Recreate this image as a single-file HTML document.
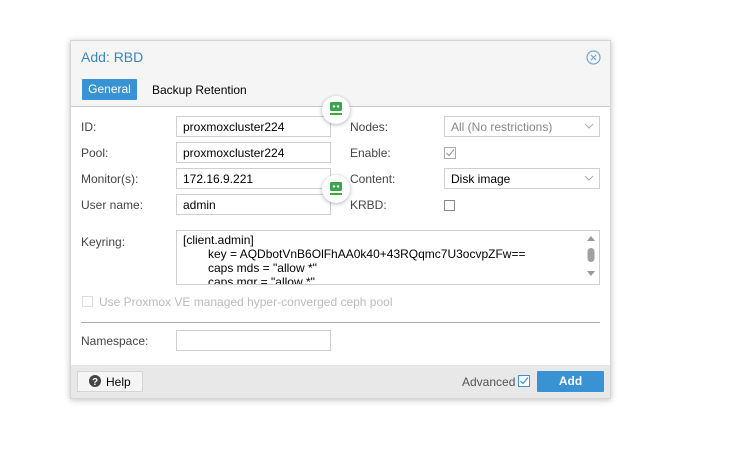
<!DOCTYPE html><html><head><style>
body{margin:0;width:753px;height:475px;background:#fff;font-family:"Liberation Sans",Arial,sans-serif;font-size:12px;color:#000;position:relative;overflow:hidden}
.a{position:absolute}
.dlg{left:70px;top:40px;width:541px;height:359px;background:#fff;border:1px solid #d6d6d6;box-shadow:0 1px 6px rgba(0,0,0,.25);box-sizing:border-box}
.lbl{color:#444;font-size:12px}
.in{border:1px solid #cfcfcf;box-sizing:border-box;height:21px;padding:3px 6px;font-size:12px;background:#fff}
.cb{width:11px;height:11px;border:1px solid #999;box-sizing:border-box;background:#fff}
.bub{width:28px;height:28px;border-radius:50%;background:#fff;box-shadow:0 1px 4px rgba(0,0,0,.3)}
</style></head><body>
<div class="a dlg"></div>
<div class="a" style="left:71px;top:41px;width:539px;height:65px;background:#f5f5f5;border-bottom:1px solid #c8c8c8"></div>
<div class="a" style="left:81px;top:49px;font-size:14px;color:#3a86c4">Add: RBD</div>
<svg class="a" style="left:586px;top:50px" width="15" height="15"><circle cx="7.5" cy="7.5" r="6.5" fill="none" stroke="#6fa5d6" stroke-width="1.2"/><path d="M5 5L10 10M10 5L5 10" stroke="#6fa5d6" stroke-width="1.2"/></svg>
<div class="a" style="left:82px;top:79px;width:55px;height:21px;background:#3892d4;color:#fff;line-height:21px;text-align:center;border-radius:1px">General</div>
<div class="a" style="left:152px;top:83px">Backup Retention</div>

<div class="a lbl" style="left:81px;top:120px">ID:</div>
<div class="a lbl" style="left:81px;top:146px">Pool:</div>
<div class="a lbl" style="left:81px;top:172px">Monitor(s):</div>
<div class="a lbl" style="left:81px;top:198px">User name:</div>
<div class="a in" style="left:176px;top:116px;width:155px">proxmoxcluster224</div>
<div class="a in" style="left:176px;top:142px;width:155px">proxmoxcluster224</div>
<div class="a in" style="left:176px;top:168px;width:155px">172.16.9.221</div>
<div class="a in" style="left:176px;top:194px;width:155px">admin</div>

<div class="a lbl" style="left:350px;top:120px">Nodes:</div>
<div class="a lbl" style="left:350px;top:146px">Enable:</div>
<div class="a lbl" style="left:350px;top:172px">Content:</div>
<div class="a lbl" style="left:350px;top:198px">KRBD:</div>
<div class="a in" style="left:444px;top:116px;width:156px;color:#888">All (No restrictions)</div>
<svg class="a" style="left:584px;top:123px" width="10" height="6"><path d="M1 1L5 5L9 1" fill="none" stroke="#aaa"/></svg>
<svg class="a" style="left:444px;top:147px" width="12" height="12"><rect x=".5" y=".5" width="11" height="11" fill="#fff" stroke="#aaa"/><path d="M2.5 6L5 8.5L10 2.5" fill="none" stroke="#999" stroke-width="1.2"/></svg>
<div class="a in" style="left:444px;top:168px;width:156px">Disk image</div>
<svg class="a" style="left:584px;top:175px" width="10" height="6"><path d="M1 1L5 5L9 1" fill="none" stroke="#aaa"/></svg>
<div class="a cb" style="left:444px;top:200px;border-color:#888"></div>

<div class="a bub" style="left:322px;top:96px"></div>
<div class="a bub" style="left:322px;top:175px"></div>
<svg class="a" style="left:328px;top:101px" width="16" height="16"><rect x="2" y="1" width="12" height="9" rx="1.5" fill="#3aa64a"/><circle cx="6" cy="5.5" r="1.2" fill="#fff"/><circle cx="10" cy="5.5" r="1.2" fill="#fff"/><rect x="2" y="12" width="12" height="2" fill="#3aa64a"/></svg>
<svg class="a" style="left:328px;top:181px" width="16" height="16"><rect x="2" y="1" width="12" height="9" rx="1.5" fill="#3aa64a"/><circle cx="6" cy="5.5" r="1.2" fill="#fff"/><circle cx="10" cy="5.5" r="1.2" fill="#fff"/><rect x="2" y="12" width="12" height="2" fill="#3aa64a"/></svg>

<div class="a lbl" style="left:81px;top:235px">Keyring:</div>
<div class="a" style="left:176px;top:230px;width:424px;height:55px;border:1px solid #cfcfcf;box-sizing:border-box;overflow:hidden;font-size:12px;line-height:14px;padding:2px 6px">[client.admin]<br><span style="padding-left:25px">key = AQDbotVnB6OlFhAA0k40+43RQqmc7U3ocvpZFw==</span><br><span style="padding-left:25px">caps mds = "allow *"</span><br><span style="padding-left:25px">caps mgr = "allow *"</span></div>
<svg class="a" style="left:585px;top:234px" width="12" height="48"><path d="M2 7L6 2L10 7Z" fill="#999"/><rect x="2.5" y="14" width="7" height="14" rx="3.5" fill="#a0a0a0"/><path d="M2 37L6 42L10 37Z" fill="#999"/></svg>

<div class="a cb" style="left:82px;top:296px;border-color:#ddd"></div>
<div class="a" style="left:99px;top:295px;color:#bbb">Use Proxmox VE managed hyper-converged ceph pool</div>
<div class="a" style="left:81px;top:322px;width:519px;height:1px;background:#aaa"></div>
<div class="a lbl" style="left:81px;top:334px">Namespace:</div>
<div class="a in" style="left:176px;top:330px;width:155px"></div>

<div class="a" style="left:71px;top:365px;width:539px;height:33px;background:#e8e8e8"></div>
<div class="a" style="left:77px;top:371px;width:66px;height:21px;background:#f5f5f5;border:1px solid #d4d4d4;box-sizing:border-box"></div>
<svg class="a" style="left:89px;top:375px" width="12" height="12"><circle cx="6" cy="6" r="6" fill="#444"/><text x="6" y="10" font-size="10" font-weight="bold" fill="#fff" text-anchor="middle" font-family="Liberation Sans">?</text></svg>
<div class="a" style="left:106px;top:375px">Help</div>
<div class="a" style="left:462px;top:375px;color:#555">Advanced</div>
<svg class="a" style="left:518px;top:375px" width="12" height="12"><rect x=".5" y=".5" width="11" height="11" fill="#fff" stroke="#3892d4"/><path d="M2.5 6L5 8.5L10 2.5" fill="none" stroke="#3892d4" stroke-width="1.2"/></svg>
<div class="a" style="left:537px;top:371px;width:67px;height:21px;background:#3892d4;color:#fff;text-align:center;line-height:21px;border-radius:1px;font-weight:bold">Add</div>
</body></html>
